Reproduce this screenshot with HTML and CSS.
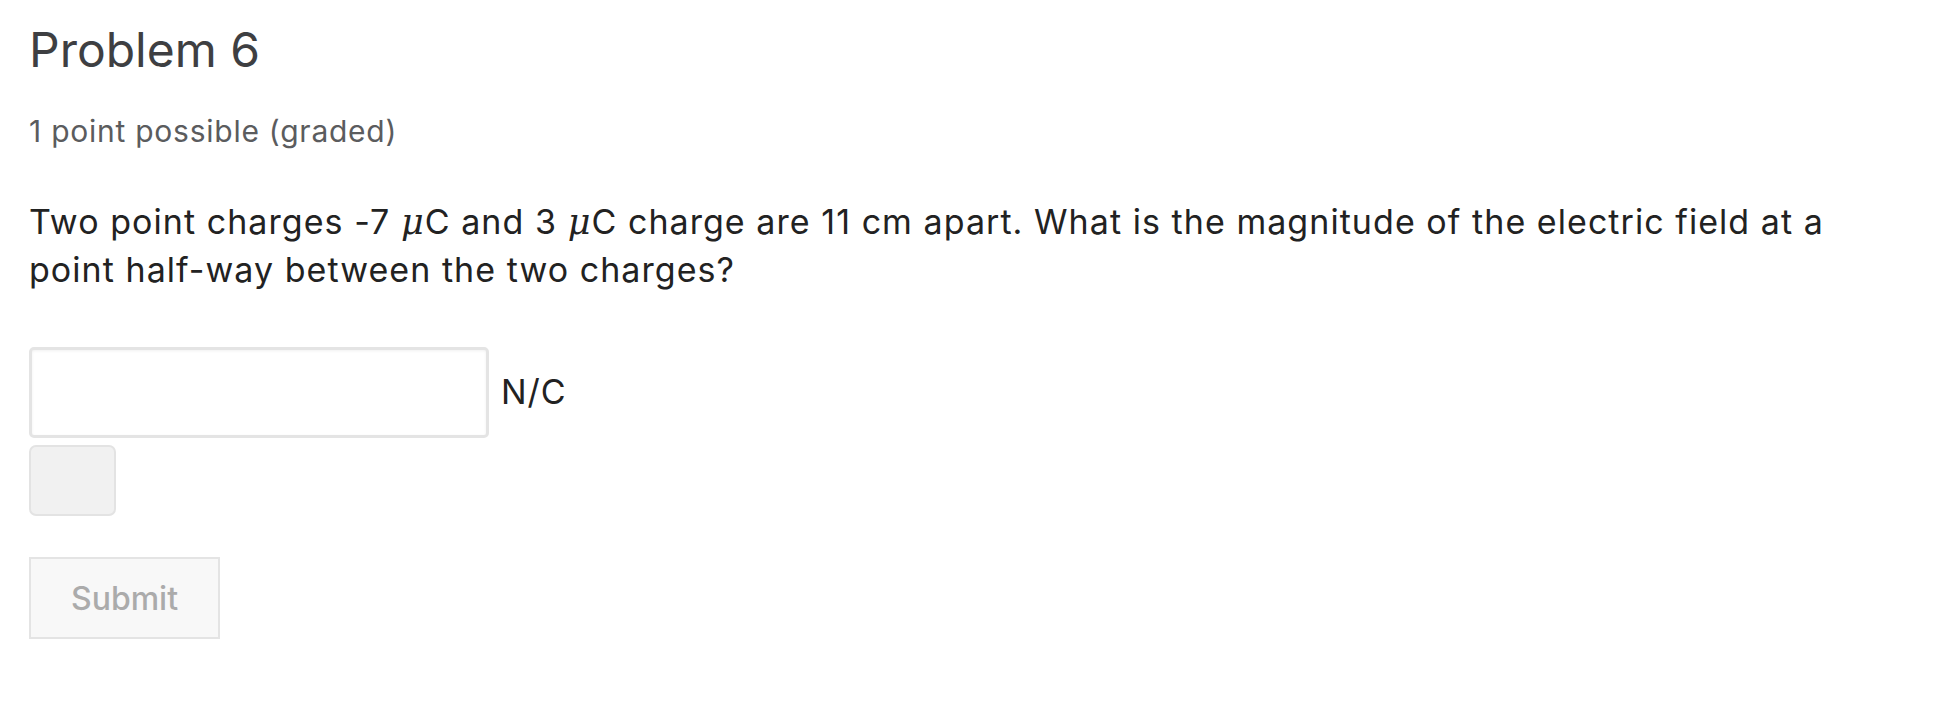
FILE: index.html
```html
<!DOCTYPE html>
<html lang="en">
<head>
<meta charset="utf-8">
<title>Problem 6</title>
<link rel="stylesheet" href="styles.css">
</head>
<body>
<div class="problem">
  <h3 class="problem-title">Problem 6</h3>
  <div class="problem-progress">1 point possible (graded)</div>
  <p class="problem-text">Two point charges -7 <span class="math"><i>μ</i>C</span> and 3 <span class="math"><i>μ</i>C</span> charge are 11 cm apart. What is the magnitude of the electric field at a point half-way between the two charges?</p>
  <div class="answer-row">
    <input class="answer-input" type="text" aria-label="answer">
    <span class="unit">N/C</span>
  </div>
  <div class="status-box"></div>
  <button class="submit-btn" type="button" disabled>Submit</button>
</div>
</body>
</html>
```

FILE: styles.css
```css
html, body {
  margin: 0;
  padding: 0;
  background: #ffffff;
}

body {
  font-family: "Inter", "Noto Sans", "Liberation Sans", sans-serif;
}

.problem {
  padding: 0 29px;
  display: flex;
  flex-direction: column;
  align-items: flex-start;
}

.problem-title {
  margin: 21px 0 0 0;
  font-size: 48px;
  line-height: 57.6px;
  font-weight: 400;
  color: #3e3f42;
}

.problem-progress {
  margin-top: 30px;
  font-size: 30px;
  line-height: 45px;
  letter-spacing: 0.75px;
  color: #5b5c5e;
}

.problem-text {
  margin: 44px 0 0 0;
  font-size: 34px;
  line-height: 48px;
  letter-spacing: 1.05px;
  color: #222222;
  max-width: 1850px;
}

.math i {
  font-family: "DejaVu Serif", "Liberation Serif", serif;
  font-style: italic;
  font-size: 35px;
  letter-spacing: 0;
  margin-right: 1px;
}

.answer-row {
  margin-top: 53px;
  display: flex;
  align-items: center;
  gap: 12px;
}

.answer-input {
  box-sizing: border-box;
  width: 460px;
  height: 91px;
  margin: 0;
  border: 3px solid #e4e4e4;
  border-radius: 5px;
  box-shadow: inset 0 1px 3px rgba(0, 0, 0, 0.06);
  background: #ffffff;
  font-family: inherit;
  font-size: 34px;
  padding: 0 16px;
}

.unit {
  font-size: 34px;
  line-height: 48px;
  letter-spacing: 1px;
  color: #222222;
}

.status-box {
  box-sizing: border-box;
  margin-top: 7px;
  width: 87px;
  height: 71px;
  background: #f1f1f1;
  border: 2px solid #e3e3e3;
  border-radius: 7px;
}

.submit-btn {
  box-sizing: border-box;
  margin-top: 41px;
  width: 191px;
  height: 82px;
  padding: 2px 0 0 0;
  background: #f8f8f8;
  border: 2px solid #e4e4e4;
  border-radius: 0;
  font-family: inherit;
  font-size: 32px;
  font-weight: 500;
  color: #ababab;
  text-align: center;
}
```
